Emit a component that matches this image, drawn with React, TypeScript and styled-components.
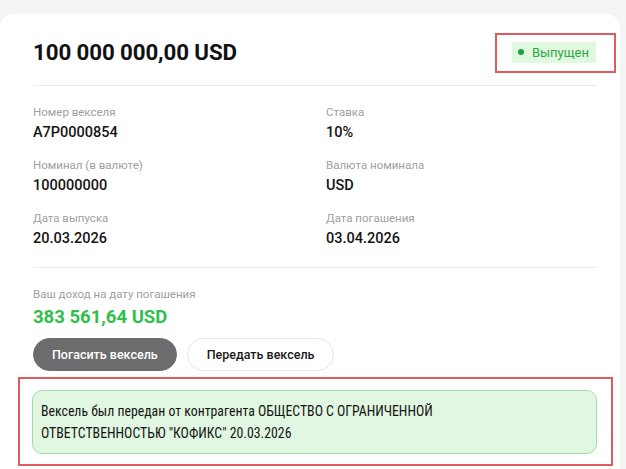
import React from "react";
import styled, { createGlobalStyle } from "styled-components";

const Global = createGlobalStyle`
  html, body {
    margin: 0;
    padding: 0;
    background: #f4f4f5;
    font-family: Roboto, "Noto Sans", Arial, sans-serif;
    color: #161616;
  }
  * { box-sizing: border-box; }
`;

const Page = styled.div`
  width: 626px;
  height: 469px;
  overflow: hidden;
  padding: 14px 6px 0 0;
`;

const Card = styled.section`
  background: #ffffff;
  border-radius: 14px 14px 0 0;
  min-height: 470px;
  padding: 24px 23px 0 33px;
  display: flex;
  flex-direction: column;
`;

const Header = styled.div`
  display: flex;
  align-items: center;
  justify-content: space-between;
  height: 28px;
`;

const Title = styled.h1`
  margin: 0;
  font-size: 22.3px;
  font-weight: 700;
  letter-spacing: -0.1px;
  color: #111;
`;

const Highlight = styled.div<{ $t: number; $r: number; $b: number; $l: number }>`
  position: relative;
  &::after {
    content: "";
    position: absolute;
    top: ${(p) => -p.$t}px;
    right: ${(p) => -p.$r}px;
    bottom: ${(p) => -p.$b}px;
    left: ${(p) => -p.$l}px;
    border: 2.5px solid #df5b5d;
    pointer-events: none;
  }
`;

const Badge = styled.div`
  display: flex;
  align-items: center;
  gap: 8px;
  height: 21px;
  padding: 0 7px 0 6px;
  background: #e0f8e0;
  color: #2ea940;
  font-size: 13px;
  margin-right: 1px;
`;

const Dot = styled.span`
  width: 6px;
  height: 6px;
  border-radius: 50%;
  background: #17a537;
`;

const Divider = styled.hr<{ $top: number }>`
  margin: ${(p) => p.$top}px 0 0 0;
  border: 0;
  height: 1px;
  background: #ececec;
`;

const Fields = styled.div`
  display: grid;
  grid-template-columns: 1fr 1fr;
  column-gap: 22px;
  row-gap: 14px;
  margin-top: 18px;
`;

const Field = styled.div`
  display: flex;
  flex-direction: column;
  gap: 3px;
`;

const Label = styled.span`
  font-size: 11.5px;
  line-height: 16px;
  color: #a0a0a0;
`;

const Value = styled.span`
  font-size: 14.5px;
  line-height: 20px;
  font-weight: 500;
  color: #141414;
`;

const Income = styled.div`
  display: flex;
  flex-direction: column;
  gap: 3px;
  margin-top: 18px;
`;

const Amount = styled.span`
  font-size: 18.5px;
  line-height: 24px;
  font-weight: 700;
  color: #2fc04a;
`;

const Actions = styled.div`
  display: flex;
  gap: 10px;
  margin-top: 9px;
`;

const Button = styled.button<{ $primary?: boolean }>`
  height: 33px;
  border-radius: 17px;
  padding: 0 ${(p) => (p.$primary ? 18 : 19)}px;
  font-family: Roboto, "Noto Sans", Arial, sans-serif;
  font-size: 12.5px;
  font-weight: 500;
  cursor: pointer;
  background: ${(p) => (p.$primary ? "#6c6c6e" : "#ffffff")};
  color: ${(p) => (p.$primary ? "#ffffff" : "#1a1a1a")};
  border: 1px solid ${(p) => (p.$primary ? "#6c6c6e" : "#e4e4e4")};
`;

const NoticeWrap = styled(Highlight)`
  margin-top: 19px;
  margin-left: -1px;
`;

const Notice = styled.div`
  background: #e1f7e1;
  border: 1px solid #a6dba6;
  border-radius: 10px;
  padding: 9px 48px 9px 8px;
  font-family: "Roboto Condensed", "Liberation Sans Narrow", "DejaVu Sans Condensed", Roboto, sans-serif;
  font-stretch: condensed;
  font-size: 13.8px;
  line-height: 22px;
  color: #141414;
`;

const fields = [
  ["Номер векселя", "A7P0000854"],
  ["Ставка", "10%"],
  ["Номинал (в валюте)", "100000000"],
  ["Валюта номинала", "USD"],
  ["Дата выпуска", "20.03.2026"],
  ["Дата погашения", "03.04.2026"],
];

export default function App() {
  return (
    <>
      <Global />
      <Page>
        <Card>
          <Header>
            <Title>100 000 000,00 USD</Title>
            <Highlight $t={9} $r={19} $b={10} $l={17}>
              <Badge>
                <Dot />
                Выпущен
              </Badge>
            </Highlight>
          </Header>
          <Divider $top={19} />
          <Fields>
            {fields.map(([l, v]) => (
              <Field key={l}>
                <Label>{l}</Label>
                <Value>{v}</Value>
              </Field>
            ))}
          </Fields>
          <Divider $top={18} />
          <Income>
            <Label>Ваш доход на дату погашения</Label>
            <Amount>383 561,64 USD</Amount>
          </Income>
          <Actions>
            <Button $primary>Погасить вексель</Button>
            <Button>Передать вексель</Button>
          </Actions>
          <NoticeWrap $t={13} $r={16} $b={12} $l={14}>
            <Notice>
              Вексель был передан от контрагента ОБЩЕСТВО С ОГРАНИЧЕННОЙ
              ОТВЕТСТВЕННОСТЬЮ "КОФИКС" 20.03.2026
            </Notice>
          </NoticeWrap>
        </Card>
      </Page>
    </>
  );
}
